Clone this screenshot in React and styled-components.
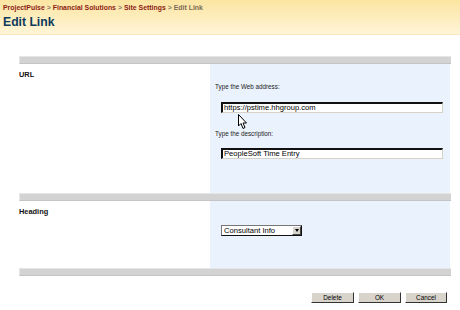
import React from 'react';
import styled, { createGlobalStyle } from 'styled-components';

const Global = createGlobalStyle`
body {
  margin: 0;
  background: #fff;
  font-family: "Liberation Sans", Arial, sans-serif;
}
`

const Page = styled.div`
position: relative;
width: 460px;
height: 310px;
overflow: hidden;
`

const Header = styled.div`
height: 35px;
box-sizing: border-box;
padding: 3px 3px 0;
background: linear-gradient(#fce5a2, #fff4d6);
border-bottom: 1px solid #f8e7bc;
`

const Crumbs = styled.div`
font-size: 6.9px;
font-weight: bold;
color: #7a6a55;
line-height: 9px;
white-space: nowrap;
`

const Crumb = styled.span`
color: #8c1c12;
`

const Sep = styled.span`
color: #8a7a66;
padding: 0 2px;
`

const Title = styled.h1`
margin: 1px 0 0;
font-size: 12.2px;
font-weight: bold;
color: #0b3a5c;
line-height: 18px;
`

const Form = styled.div`
margin: 21px 9px 0 19px;
`

const Bar = styled.div`
height: 6px;
background: #d3d3d3;
border-top: 1px solid #e6e6e6;
border-left: 1px solid #e6e6e6;
border-bottom: 1px solid #c4c4c4;
`

const Section = styled.div`
display: grid;
grid-template-columns: 191px 1fr;
height: ${p => p.h}px;
`

const Label = styled.div`
font-size: 7.4px;
font-weight: bold;
color: #111;
padding: 6px 0 0 0;
`

const Field = styled.div`
background: #eaf2fd;
margin-right: 1px;
padding: ${p => p.pad};
display: flex;
flex-direction: column;
`

const Hint = styled.div`
font-size: 6.3px;
color: #222;
line-height: 8px;
margin-left: -6px;
margin-top: ${p => p.mt || 0}px;
`

const TextBox = styled.div`
height: 11px;
box-sizing: border-box;
width: 222px;
margin-top: ${p => p.mt}px;
border-top: 2px solid #111;
border-left: 2px solid #111;
border-right: 1px solid #d6d2c8;
border-bottom: 1px solid #d6d2c8;
background: #fff;
font-size: 7.6px;
line-height: 8px;
padding-left: 1px;
color: #000;
white-space: nowrap;
`

const Select = styled.div`
width: 81px;
height: 11px;
box-sizing: border-box;
margin-top: ${p => p.mt}px;
border-top: 1px solid #777;
border-left: 1px solid #777;
border-right: 1px solid #111;
border-bottom: 1px solid #111;
background: #fff;
display: flex;
align-items: center;
justify-content: space-between;
font-size: 7.6px;
padding-left: 2px;
color: #000;
`

const Arrow = styled.div`
width: 9px;
height: 9px;
box-sizing: border-box;
background: #d8d4cc;
border: 1px solid #444;
border-top-color: #fff;
border-left-color: #fff;
display: flex;
align-items: center;
justify-content: center;
&::after {
  content: '';
  border-left: 2.5px solid transparent;
  border-right: 2.5px solid transparent;
  border-top: 3px solid #000;
}
`

const Buttons = styled.div`
display: flex;
justify-content: flex-end;
gap: 4px;
margin: 16px 13px 0 0;
`

const Button = styled.div`
width: ${p => p.w}px;
height: 11px;
box-sizing: border-box;
background: #d8d4cc;
border-top: 1px solid #fff;
border-left: 1px solid #fff;
border-right: 1px solid #333;
border-bottom: 1px solid #333;
font-size: 6.4px;
line-height: 9px;
text-align: center;
color: #000;
`

const Cursor = styled.svg`
position: absolute;
left: 238px;
top: 114px;
`

const App = () => {
  return (
    <Page>
      <Global />
      <Header>
        <Crumbs>
          <Crumb>ProjectPulse</Crumb><Sep>&gt;</Sep>
          <Crumb>Financial Solutions</Crumb><Sep>&gt;</Sep>
          <Crumb>Site Settings</Crumb><Sep>&gt;</Sep>
          Edit Link
        </Crumbs>
        <Title>Edit Link</Title>
      </Header>
      <Form>
        <Bar />
        <Section h={129}>
          <Label>URL</Label>
          <Field pad="19px 0 0 11px">
            <Hint>Type the Web address:</Hint>
            <TextBox mt={11}>https://pstime.hhgroup.com</TextBox>
            <Hint mt={17}>Type the description:</Hint>
            <TextBox mt={10}>PeopleSoft Time Entry</TextBox>
          </Field>
        </Section>
        <Bar />
        <Section h={67}>
          <Label>Heading</Label>
          <Field pad="0 0 0 11px">
            <Select mt={24}>
              Consultant Info
              <Arrow />
            </Select>
          </Field>
        </Section>
        <Bar />
      </Form>
      <Buttons>
        <Button w={43}>Delete</Button>
        <Button w={43}>OK</Button>
        <Button w={42}>Cancel</Button>
      </Buttons>
      <Cursor width="10" height="16" viewBox="0 0 10 16">
        <path d="M0.5 0.5 L0.5 12 L3 9.5 L5 14.5 L7 13.5 L5 9 L8.5 9 Z" fill="#fff" stroke="#000" strokeWidth="1" strokeLinejoin="miter" />
      </Cursor>
    </Page>
  );
};

export default App;
